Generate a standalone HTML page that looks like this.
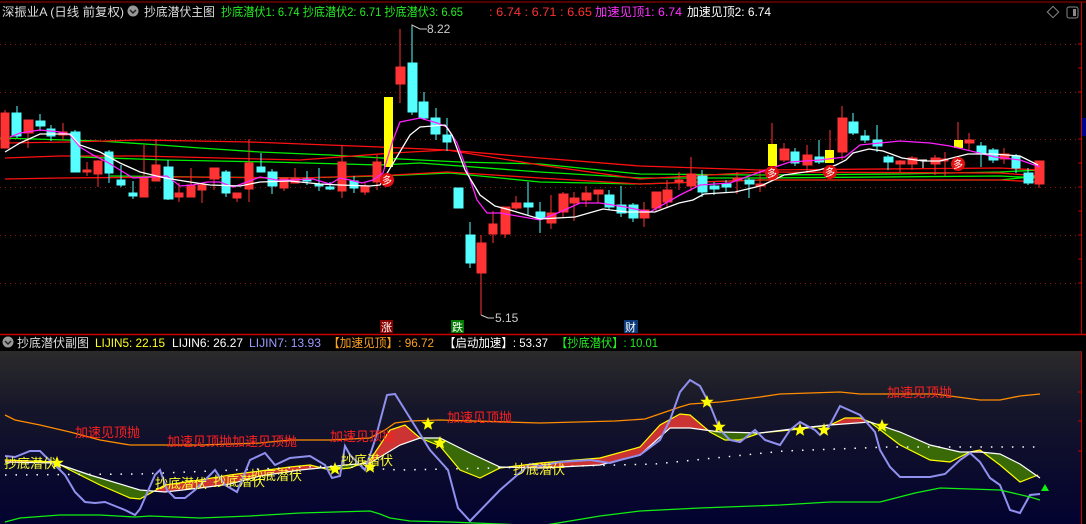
<!DOCTYPE html>
<html><head><meta charset="utf-8"><style>
html,body{margin:0;padding:0;background:#000;width:1086px;height:524px;overflow:hidden}
svg{display:block}
text{font-family:"Liberation Sans","Noto Sans CJK SC",sans-serif}
</style></head><body>
<svg width="1086" height="524" viewBox="0 0 1086 524" xmlns="http://www.w3.org/2000/svg">
<defs>
<linearGradient id="bg" x1="0" y1="0" x2="0" y2="1">
<stop offset="0" stop-color="#2b2b2b"/><stop offset="0.35" stop-color="#15152a"/><stop offset="1" stop-color="#020230"/>
</linearGradient>
<clipPath id="above"><polygon points="0,350 0,462 5,462 55,463 90,475 140,490 165,492 200,488 230,484 260,476 300,470 320,468 345,465 370,463 400,445 420,438 440,438 470,453 500,467 540,468 600,465 640,455 670,428 690,428 720,432 760,433 800,428 830,425 870,422 900,432 930,445 960,452 980,452 1000,454 1020,464 1040,478 1086,478 1086,350"/></clipPath>
<clipPath id="below"><polygon points="0,524 0,462 5,462 55,463 90,475 140,490 165,492 200,488 230,484 260,476 300,470 320,468 345,465 370,463 400,445 420,438 440,438 470,453 500,467 540,468 600,465 640,455 670,428 690,428 720,432 760,433 800,428 830,425 870,422 900,432 930,445 960,452 980,452 1000,454 1020,464 1040,478 1086,478 1086,524"/></clipPath>
<polygon id="star" points="0,-7 1.8,-2.3 6.7,-2.2 2.9,0.9 4.1,5.7 0,3 -4.1,5.7 -2.9,0.9 -6.7,-2.2 -1.8,-2.3"/>
</defs>
<rect width="1086" height="524" fill="#000"/>
<line x1="0" y1="2" x2="1086" y2="2" stroke="#a00"/>
<line x1="1081.5" y1="2" x2="1081.5" y2="334" stroke="#c00"/>
<line x1="0" y1="334.5" x2="1086" y2="334.5" stroke="#c00" stroke-width="1.5"/>
<g stroke="#c00"><line x1="1078" y1="44" x2="1081" y2="44"/><line x1="1078" y1="68" x2="1081" y2="68"/><line x1="1078" y1="92" x2="1081" y2="92"/><line x1="1078" y1="139" x2="1081" y2="139"/><line x1="1078" y1="163" x2="1081" y2="163"/><line x1="1078" y1="187" x2="1081" y2="187"/><line x1="1078" y1="211" x2="1081" y2="211"/><line x1="1078" y1="235" x2="1081" y2="235"/><line x1="1078" y1="259" x2="1081" y2="259"/><line x1="1078" y1="283" x2="1081" y2="283"/></g>
<rect x="1082" y="118" width="4" height="18" fill="#00008a"/>
<g stroke="#8a1a1a" stroke-dasharray="1,4">
<line x1="0" y1="44.5" x2="1078" y2="44.5"/><line x1="0" y1="92.5" x2="1078" y2="92.5"/><line x1="0" y1="139.5" x2="1078" y2="139.5"/><line x1="0" y1="187.5" x2="1078" y2="187.5"/><line x1="0" y1="235.5" x2="1078" y2="235.5"/><line x1="0" y1="283.5" x2="1078" y2="283.5"/>
</g>
<g fill="none" stroke-width="1.3">
<polyline stroke="#00ee00" points="0,138 100,141 160,145 200,148 260,152 330,155 400,159 460,162 540,164 640,174 760,175 900,174 1000,172 1040,170"/>
<polyline stroke="#00ee00" points="80,157 165,160 270,162 380,165 420,163 540,172 640,178 760,178 1000,176 1040,178"/>
<polyline stroke="#00ee00" points="110,176 200,177 300,178 380,176 450,173 540,182 640,184 760,180 1000,180 1040,176"/>
<polyline stroke="#ff1010" points="5,143 70,142 140,140 250,142 380,147 447,150 540,158 640,166 760,170 1000,168 1040,170"/>
<polyline stroke="#ff1010" points="5,158 60,156 140,156 300,160 393,153 447,150 540,165 640,179 760,172 1000,173 1040,176"/>
<polyline stroke="#ff1010" points="5,179 60,178 180,177 300,178 393,175 447,172 540,178 640,184 760,180 1000,180 1040,182"/>
</g>
<g>
<g fill="#ff3333" stroke="#ff3333">
<line x1="5" y1="110" x2="5" y2="148"/><rect x="1" y="113" width="8" height="35"/>
<line x1="28" y1="120" x2="28" y2="148"/><rect x="24" y="120" width="9" height="13"/>
<line x1="63" y1="123" x2="63" y2="140"/><rect x="59" y="132" width="8" height="3"/>
<line x1="87" y1="162" x2="87" y2="176"/><rect x="83" y="170" width="8" height="2"/>
<line x1="98" y1="160" x2="98" y2="187"/><rect x="94" y="161" width="8" height="13"/>
<line x1="144" y1="145" x2="144" y2="197"/><rect x="140" y="178" width="8" height="19"/>
<line x1="156" y1="139" x2="156" y2="181"/><rect x="152" y="165" width="8" height="16"/>
<line x1="179" y1="183" x2="179" y2="202"/><rect x="175" y="193" width="8" height="4"/>
<line x1="191" y1="168" x2="191" y2="197"/><rect x="187" y="185" width="8" height="12"/>
<line x1="202" y1="185" x2="202" y2="203"/><rect x="198" y="185" width="8" height="5"/>
<line x1="214" y1="168" x2="214" y2="190"/><rect x="210" y="168" width="9" height="11"/>
<line x1="237" y1="193" x2="237" y2="202"/><rect x="233" y="193" width="8" height="5"/>
<line x1="249" y1="139" x2="249" y2="202"/><rect x="245" y="163" width="8" height="26"/>
<line x1="284" y1="178" x2="284" y2="191"/><rect x="280" y="178" width="8" height="10"/>
<line x1="295" y1="168" x2="295" y2="183"/><rect x="291" y="178" width="8" height="5"/>
<line x1="342" y1="145" x2="342" y2="198"/><rect x="338" y="162" width="8" height="29"/>
<line x1="365" y1="183" x2="365" y2="195"/><rect x="361" y="186" width="8" height="6"/>
<line x1="377" y1="155" x2="377" y2="190"/><rect x="373" y="162" width="8" height="20"/>
<line x1="400" y1="29" x2="400" y2="103"/><rect x="396" y="67" width="9" height="17"/>
<line x1="481" y1="235" x2="481" y2="315"/><rect x="477" y="243" width="9" height="30"/>
<line x1="493" y1="211" x2="493" y2="243"/><rect x="489" y="224" width="8" height="10"/>
<line x1="505" y1="207" x2="505" y2="238"/><rect x="501" y="207" width="9" height="27"/>
<line x1="516" y1="196" x2="516" y2="210"/><rect x="512" y="203" width="9" height="5"/>
<line x1="551" y1="195" x2="551" y2="229"/><rect x="547" y="213" width="9" height="10"/>
<line x1="563" y1="192" x2="563" y2="217"/><rect x="559" y="194" width="9" height="18"/>
<line x1="574" y1="192" x2="574" y2="221"/><rect x="570" y="198" width="9" height="5"/>
<line x1="586" y1="186" x2="586" y2="207"/><rect x="582" y="193" width="9" height="7"/>
<line x1="598" y1="190" x2="598" y2="203"/><rect x="594" y="190" width="9" height="4"/>
<line x1="644" y1="202" x2="644" y2="227"/><rect x="640" y="210" width="9" height="8"/>
<line x1="656" y1="193" x2="656" y2="211"/><rect x="652" y="192" width="9" height="16"/>
<line x1="667" y1="180" x2="667" y2="208"/><rect x="663" y="190" width="9" height="12"/>
<line x1="679" y1="172" x2="679" y2="190"/><rect x="675" y="180" width="8" height="2"/>
<line x1="691" y1="157" x2="691" y2="191"/><rect x="687" y="174" width="9" height="12"/>
<line x1="737" y1="172" x2="737" y2="194"/><rect x="733" y="178" width="9" height="2"/>
<line x1="760" y1="170" x2="760" y2="192"/><rect x="756" y="184" width="9" height="2"/>
<line x1="784" y1="143" x2="784" y2="162"/><rect x="780" y="149" width="9" height="11"/>
<line x1="807" y1="145" x2="807" y2="173"/><rect x="803" y="155" width="9" height="10"/>
<line x1="842" y1="106" x2="842" y2="160"/><rect x="838" y="118" width="9" height="34"/>
<line x1="900" y1="160" x2="900" y2="172"/><rect x="896" y="161" width="9" height="3"/>
<line x1="912" y1="156" x2="912" y2="170"/><rect x="908" y="158" width="9" height="6"/>
<line x1="935" y1="155" x2="935" y2="175"/><rect x="931" y="158" width="9" height="6"/>
<line x1="945" y1="152" x2="945" y2="176"/><rect x="941" y="159" width="7" height="2"/>
<line x1="969" y1="133" x2="969" y2="150"/><rect x="965" y="140" width="9" height="3"/>
<line x1="1004" y1="148" x2="1004" y2="164"/><rect x="1000" y="154" width="9" height="5"/>
<line x1="1039" y1="161" x2="1039" y2="188"/><rect x="1035" y="161" width="9" height="23"/>
</g>
<g fill="#55ffff" stroke="#55ffff">
<line x1="17" y1="106" x2="17" y2="138"/><rect x="12" y="113" width="9" height="23"/>
<line x1="40" y1="114" x2="40" y2="131"/><rect x="36" y="121" width="9" height="5"/>
<line x1="51" y1="125" x2="51" y2="141"/><rect x="47" y="129" width="8" height="7"/>
<line x1="75" y1="130" x2="75" y2="172"/><rect x="71" y="132" width="9" height="40"/>
<line x1="109" y1="150" x2="109" y2="183"/><rect x="105" y="152" width="8" height="21"/>
<line x1="121" y1="165" x2="121" y2="187"/><rect x="117" y="180" width="8" height="5"/>
<line x1="133" y1="181" x2="133" y2="199"/><rect x="129" y="193" width="8" height="3"/>
<line x1="168" y1="160" x2="168" y2="200"/><rect x="164" y="167" width="9" height="32"/>
<line x1="226" y1="170" x2="226" y2="197"/><rect x="222" y="172" width="8" height="21"/>
<line x1="261" y1="153" x2="261" y2="172"/><rect x="257" y="167" width="8" height="5"/>
<line x1="272" y1="169" x2="272" y2="194"/><rect x="268" y="172" width="9" height="14"/>
<line x1="307" y1="171" x2="307" y2="185"/><rect x="303" y="179" width="8" height="2"/>
<line x1="319" y1="168" x2="319" y2="191"/><rect x="315" y="184" width="8" height="2"/>
<line x1="330" y1="182" x2="330" y2="190"/><rect x="326" y="187" width="8" height="2"/>
<line x1="354" y1="176" x2="354" y2="193"/><rect x="350" y="181" width="8" height="7"/>
<line x1="412" y1="25" x2="412" y2="115"/><rect x="408" y="63" width="9" height="49"/>
<line x1="424" y1="92" x2="424" y2="120"/><rect x="419" y="102" width="9" height="16"/>
<line x1="436" y1="108" x2="436" y2="140"/><rect x="431" y="118" width="9" height="16"/>
<line x1="447" y1="118" x2="447" y2="151"/><rect x="443" y="135" width="8" height="7"/>
<rect x="454" y="188" width="9" height="20"/>
<line x1="470" y1="222" x2="470" y2="268"/><rect x="466" y="235" width="9" height="28"/>
<line x1="528" y1="182" x2="528" y2="215"/><rect x="524" y="203" width="9" height="4"/>
<line x1="540" y1="202" x2="540" y2="233"/><rect x="536" y="212" width="9" height="6"/>
<line x1="609" y1="190" x2="609" y2="210"/><rect x="605" y="195" width="9" height="12"/>
<line x1="621" y1="186" x2="621" y2="217"/><rect x="617" y="205" width="9" height="8"/>
<line x1="633" y1="203" x2="633" y2="222"/><rect x="629" y="205" width="9" height="13"/>
<line x1="702" y1="170" x2="702" y2="197"/><rect x="698" y="176" width="9" height="16"/>
<line x1="714" y1="182" x2="714" y2="195"/><rect x="710" y="186" width="9" height="3"/>
<line x1="726" y1="180" x2="726" y2="192"/><rect x="722" y="184" width="9" height="3"/>
<line x1="749" y1="178" x2="749" y2="198"/><rect x="745" y="180" width="9" height="4"/>
<line x1="795" y1="148" x2="795" y2="166"/><rect x="791" y="152" width="8" height="11"/>
<line x1="819" y1="140" x2="819" y2="164"/><rect x="815" y="157" width="9" height="5"/>
<line x1="853" y1="113" x2="853" y2="135"/><rect x="849" y="122" width="9" height="11"/>
<line x1="865" y1="130" x2="865" y2="143"/><rect x="861" y="136" width="8" height="4"/>
<line x1="877" y1="125" x2="877" y2="152"/><rect x="873" y="140" width="9" height="6"/>
<line x1="888" y1="155" x2="888" y2="170"/><rect x="884" y="157" width="9" height="5"/>
<line x1="981" y1="142" x2="981" y2="167"/><rect x="977" y="146" width="9" height="8"/>
<line x1="993" y1="148" x2="993" y2="163"/><rect x="989" y="150" width="9" height="10"/>
<line x1="1016" y1="154" x2="1016" y2="173"/><rect x="1012" y="156" width="8" height="12"/>
<line x1="1028" y1="168" x2="1028" y2="185"/><rect x="1024" y="173" width="9" height="10"/>
</g>
<g stroke="#fff"><line x1="923" y1="160" x2="923" y2="168"/><line x1="919" y1="160" x2="927" y2="160"/></g>
<g fill="#ffff00" stroke="#ff3333">
<rect x="384" y="97" width="9" height="70" stroke="none"/>
<line x1="772" y1="123" x2="772" y2="145"/><rect x="768" y="144" width="9" height="22" stroke="none"/>
<line x1="830" y1="130" x2="830" y2="150"/><rect x="825" y="150" width="9" height="13" stroke="none"/>
<line x1="958" y1="122" x2="958" y2="143"/><rect x="954" y="140" width="9" height="8" stroke="none"/>
</g>
</g>
<polyline fill="none" stroke="#ff20ff" stroke-width="1.3" points="10,137 20,133 40,130 60,132 70,135 80,147 93,155 107,162 120,170 133,178 150,177 167,176 180,186 193,185 207,182 220,182 233,187 247,182 260,177 277,180 293,180 313,179 330,184 340,178 350,180 362,183 373,180 383,173 393,140 400,122 420,118 437,123 447,127 457,143 467,170 477,200 487,213 500,213 540,220 560,212 580,203 600,203 625,207 650,212 680,195 700,185 730,183 760,172 790,162 820,160 845,157 860,145 880,143 900,141 930,143 950,146 975,152 995,157 1020,160 1040,167"/>
<polyline fill="none" stroke="#ffffff" stroke-width="1.3" points="5,152 20,143 40,134 70,134 80,145 100,152 120,163 140,172 165,178 190,182 210,185 240,186 260,182 290,181 320,184 340,185 370,186 380,185 395,160 410,135 420,127 445,125 452,135 465,170 480,195 495,206 510,210 540,219 575,217 603,209 627,212 655,212 679,203 693,200 704,194 735,192 756,187 763,185 784,175 798,173 819,170 836,165 846,160 853,153 869,149 883,151 902,158 923,161 940,161 968,154 993,154 1020,156 1038,165"/>
<g font-size="10" text-anchor="middle" fill="#fff">
<circle cx="387" cy="180" r="7" fill="#e01010"/><text x="387" y="184">多</text>
<circle cx="772" cy="173" r="7" fill="#e01010"/><text x="772" y="177">多</text>
<circle cx="830" cy="172" r="7" fill="#e01010"/><text x="830" y="176">多</text>
<circle cx="958" cy="164" r="7" fill="#e01010"/><text x="958" y="168">多</text>
</g>
<g stroke="#ccc" fill="none"><polyline points="412,27 412,25 420,29 427,29"/><polyline points="481,315 488,318 494,318"/></g>
<text x="427" y="33" fill="#ccc" font-size="12">8.22</text>
<text x="495" y="322" fill="#ccc" font-size="12">5.15</text>
<rect x="380" y="320" width="13" height="13" fill="#8a0000"/><text x="381" y="331" fill="#fff" font-size="11">涨</text>
<rect x="451" y="320" width="13" height="13" fill="#007a00"/><text x="452" y="331" fill="#fff" font-size="11">跌</text>
<rect x="624" y="320" width="14" height="13" fill="#0a3a7a"/><text x="625" y="331" fill="#fff" font-size="11">财</text>
<g font-size="12">
<text x="2" y="16" fill="#ddd" textLength="122" lengthAdjust="spacingAndGlyphs">深振业A (日线 前复权)</text>
<circle cx="133" cy="11" r="5.5" fill="#999"/><polyline points="130,10 133,13 136,10" fill="none" stroke="#222" stroke-width="1.5"/>
<text x="144" y="16" fill="#ddd" textLength="71" lengthAdjust="spacingAndGlyphs">抄底潜伏主图</text>
<text x="221" y="16" fill="#22ee22" textLength="242" lengthAdjust="spacingAndGlyphs">抄底潜伏1: 6.74  抄底潜伏2: 6.71  抄底潜伏3: 6.65</text>
<text x="489" y="16" fill="#ff3030" textLength="103" lengthAdjust="spacingAndGlyphs">: 6.74  : 6.71  : 6.65</text>
<text x="595" y="16" fill="#ff30ff" textLength="87" lengthAdjust="spacingAndGlyphs">加速见顶1: 6.74</text>
<text x="687" y="16" fill="#fff" textLength="84" lengthAdjust="spacingAndGlyphs">加速见顶2: 6.74</text>
</g>
<g transform="translate(1053,12) rotate(45)"><rect x="-4" y="-4" width="8" height="8" fill="none" stroke="#888"/></g>
<rect x="1067" y="7" width="11" height="11" rx="2" fill="none" stroke="#888"/><rect x="1073" y="9" width="3" height="7" fill="#888"/>
<rect x="0" y="351" width="1081" height="173" fill="url(#bg)"/>
<line x1="1081.5" y1="351" x2="1081.5" y2="524" stroke="#c00"/>
<g stroke="#c00"><line x1="1078" y1="392" x2="1081" y2="392"/><line x1="1078" y1="421" x2="1081" y2="421"/><line x1="1078" y1="451" x2="1081" y2="451"/></g>
<g font-size="12">
<circle cx="8" cy="342" r="5.5" fill="#999"/><polyline points="5,341 8,344 11,341" fill="none" stroke="#222" stroke-width="1.5"/>
<text x="17" y="347" fill="#ddd" textLength="72" lengthAdjust="spacingAndGlyphs">抄底潜伏副图</text>
<text x="95" y="347" fill="#ffff20" textLength="70" lengthAdjust="spacingAndGlyphs">LIJIN5: 22.15</text>
<text x="172" y="347" fill="#fff" textLength="71" lengthAdjust="spacingAndGlyphs">LIJIN6: 26.27</text>
<text x="249" y="347" fill="#9a9aff" textLength="72" lengthAdjust="spacingAndGlyphs">LIJIN7: 13.93</text>
<text x="328" y="347" fill="#ffa020" textLength="106" lengthAdjust="spacingAndGlyphs">【加速见顶】: 96.72</text>
<text x="444" y="347" fill="#fff" textLength="104" lengthAdjust="spacingAndGlyphs">【启动加速】: 53.37</text>
<text x="556" y="347" fill="#22ee22" textLength="102" lengthAdjust="spacingAndGlyphs">【抄底潜伏】: 10.01</text>
</g>
<polygon points="5,460 55,462 70,470 100,485 130,498 140,499 165,485 200,480 230,475 260,471 290,467 310,465 330,470 350,468 370,460 390,430 405,425 420,438 440,446 460,470 480,478 500,468 540,463 600,458 640,447 660,425 680,414 690,415 710,432 725,440 740,440 760,433 780,431 800,429 830,425 845,418 860,418 870,422 900,445 930,460 950,462 970,452 980,450 1000,465 1020,482 1038,475 1040,478 1020,464 1000,454 980,452 960,452 930,445 900,432 870,422 830,425 800,428 760,433 720,432 690,428 670,428 640,455 600,465 540,468 500,467 470,453 440,438 420,438 400,445 370,463 345,465 320,468 300,470 260,476 230,484 200,488 165,492 140,490 90,475 55,463 5,462" fill="#cc3333" clip-path="url(#above)"/>
<polygon points="5,460 55,462 70,470 100,485 130,498 140,499 165,485 200,480 230,475 260,471 290,467 310,465 330,470 350,468 370,460 390,430 405,425 420,438 440,446 460,470 480,478 500,468 540,463 600,458 640,447 660,425 680,414 690,415 710,432 725,440 740,440 760,433 780,431 800,429 830,425 845,418 860,418 870,422 900,445 930,460 950,462 970,452 980,450 1000,465 1020,482 1038,475 1040,478 1020,464 1000,454 980,452 960,452 930,445 900,432 870,422 830,425 800,428 760,433 720,432 690,428 670,428 640,455 600,465 540,468 500,467 470,453 440,438 420,438 400,445 370,463 345,465 320,468 300,470 260,476 230,484 200,488 165,492 140,490 90,475 55,463 5,462" fill="#3a6a08" clip-path="url(#below)"/>
<polyline fill="none" stroke="#ffff00" stroke-width="1.2" points="5,460 55,462 70,470 100,485 130,498 140,499 165,485 200,480 230,475 260,471 290,467 310,465 330,470 350,468 370,460 390,430 405,425 420,438 440,446 460,470 480,478 500,468 540,463 600,458 640,447 660,425 680,414 690,415 710,432 725,440 740,440 760,433 780,431 800,429 830,425 845,418 860,418 870,422 900,445 930,460 950,462 970,452 980,450 1000,465 1020,482 1038,475"/>
<polyline fill="none" stroke="#ffffff" stroke-width="1.2" points="5,462 55,463 90,475 140,490 165,492 200,488 230,484 260,476 300,470 320,468 345,465 370,463 400,445 420,438 440,438 470,453 500,467 540,468 600,465 640,455 670,428 690,428 720,432 760,433 800,428 830,425 870,422 900,432 930,445 960,452 980,452 1000,454 1020,464 1040,478"/>
<polyline fill="none" stroke="#fff" stroke-width="1.5" stroke-dasharray="1.5,9" points="5,475 140,474 330,466 400,470 540,467 655,464 784,451 888,447 1040,447"/>
<polyline fill="none" stroke="#ff8c00" stroke-width="1.3" points="5,415 15,420 40,425 70,432 100,440 130,445 200,445 260,443 290,440 330,440 370,438 385,430 395,423 410,421 440,420 540,423 615,421 645,419 680,407 690,404 720,402 760,397 780,394 840,392 850,393 860,394 935,394 980,400 1000,400 1020,396 1040,394"/>
<polyline fill="none" stroke="#9090ee" stroke-width="2" points="5,456 15,457 30,451 40,451 45,456 55,465 65,475 75,492 85,502 95,503 105,502 115,506 125,510 135,515 140,509 155,475 160,470 167,490 175,498 185,498 195,490 215,470 225,485 237,492 250,460 265,453 275,465 290,458 310,456 325,465 332,478 340,476 345,446 350,455 365,470 375,440 387,395 395,394 410,418 430,450 448,470 458,508 470,521 500,490 530,464 540,466 560,462 590,460 610,463 620,460 640,455 660,440 670,420 680,392 690,380 700,386 710,405 720,430 730,440 740,442 755,430 765,440 780,445 790,430 800,422 815,430 820,435 830,425 840,406 860,415 875,432 880,450 890,467 900,477 930,477 945,474 960,460 970,453 980,462 990,478 1000,485 1010,510 1020,513 1030,495 1040,494"/>
<polyline fill="none" stroke="#11ee11" stroke-width="1.3" points="5,522 20,518 60,515 100,515 135,517 150,516 200,518 250,516 300,513 370,511 380,514 390,518 410,521 450,522 500,524 540,526 600,516 640,511 700,508 780,505 830,502 880,502 915,493 940,488 1000,490 1030,497 1040,500"/>
<polygon points="1045,484 1041,491 1049,491" fill="#11ee11"/>
<g fill="#ffff00">
<use href="#star" x="57" y="463"/><use href="#star" x="335" y="469"/><use href="#star" x="370" y="467"/><use href="#star" x="428" y="424"/><use href="#star" x="440" y="443"/><use href="#star" x="707" y="402"/><use href="#star" x="719" y="427"/><use href="#star" x="800" y="430"/><use href="#star" x="824" y="430"/><use href="#star" x="882" y="426"/>
</g>
<g font-size="13" fill="#ff2020">
<text x="75" y="437">加速见顶抛</text>
<text x="167" y="446">加速见顶抛加速见顶抛</text>
<text x="330" y="441">加速见顶抛</text>
<text x="447" y="422">加速见顶抛</text>
<text x="887" y="397">加速见顶抛</text>
</g>
<g font-size="13" fill="#ffff30">
<text x="4" y="468">抄底潜伏</text>
<text x="155" y="488">抄底潜伏</text>
<text x="213" y="486">抄底潜伏</text>
<text x="250" y="480">抄底潜伏</text>
<text x="341" y="465">抄底潜伏</text>
<text x="513" y="474">抄底潜伏</text>
</g>
</svg>
</body></html>
